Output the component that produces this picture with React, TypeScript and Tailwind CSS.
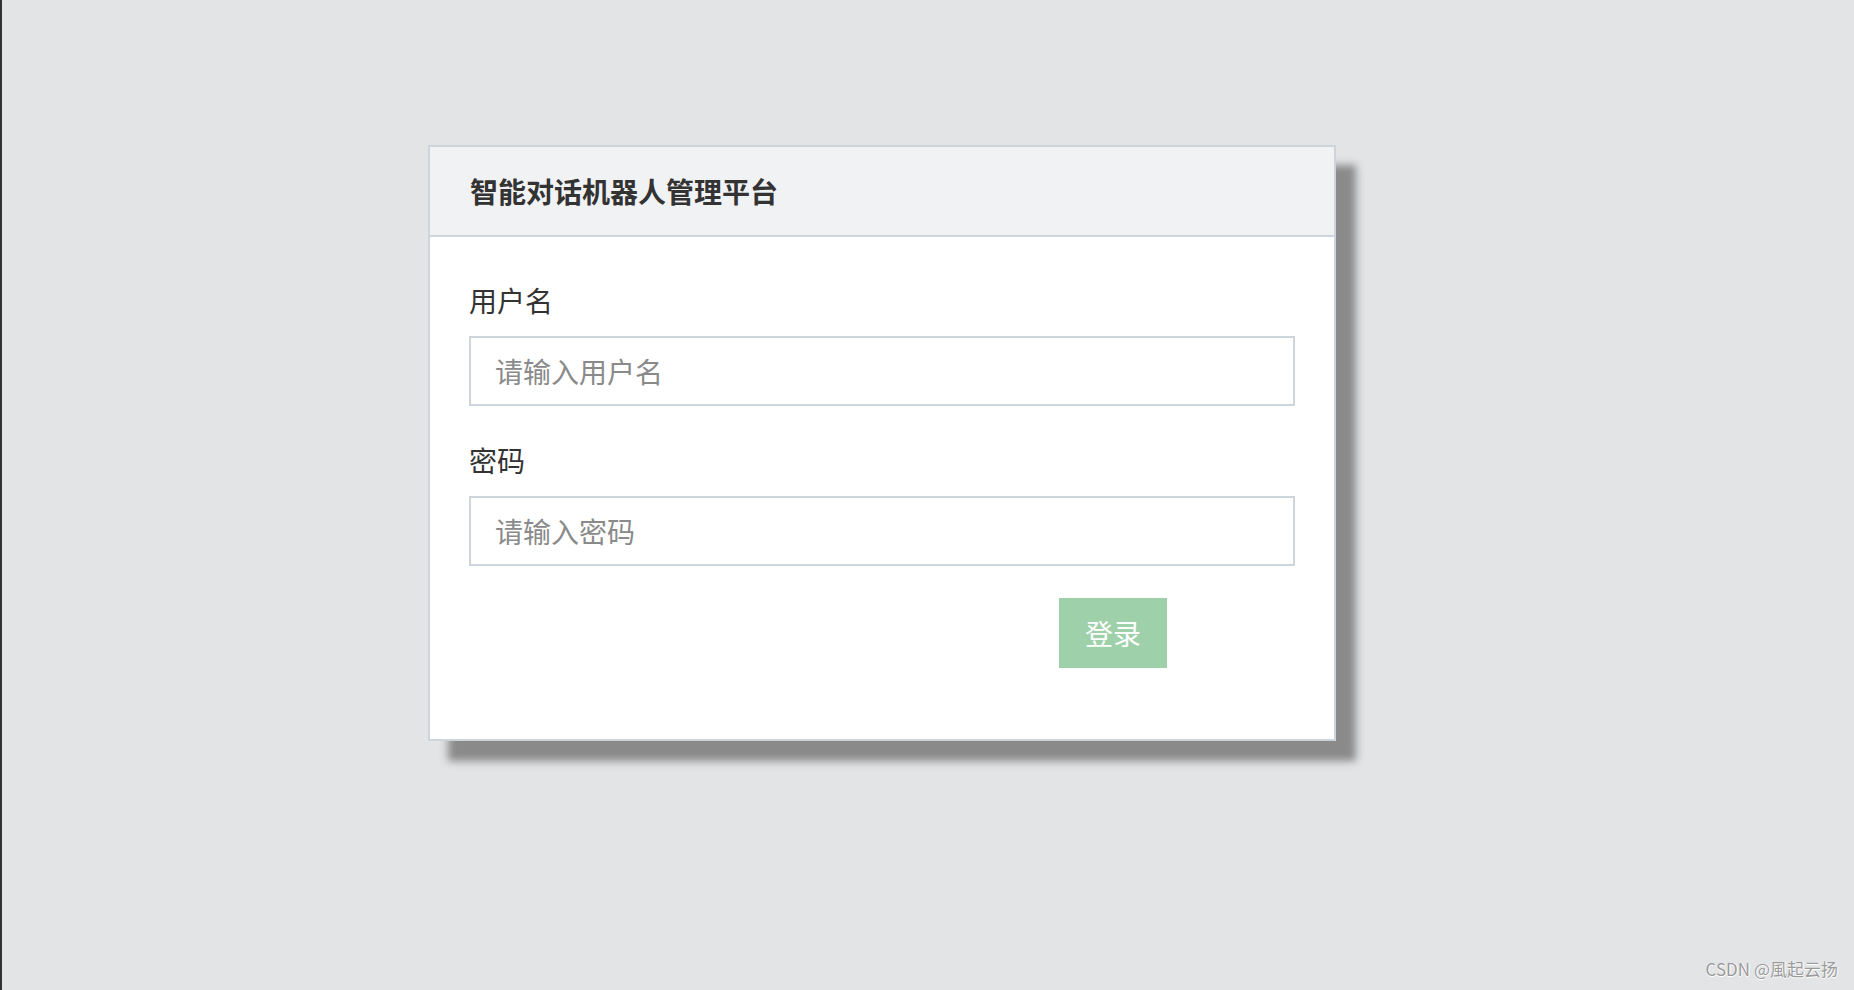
import React from "react";

const font = { fontFamily: '"Microsoft YaHei", "Noto Sans CJK SC", sans-serif' };

const Field: React.FC<{ label: string; placeholder: string; type?: string; first?: boolean }> = ({
  label,
  placeholder,
  type = "text",
  first,
}) => (
  <div className={first ? "" : "mt-[33px]"}>
    <label className="block text-[28px] leading-[42px] text-[#333]">{label}</label>
    <input
      type={type}
      placeholder={placeholder}
      className="mt-[15px] block w-full h-[70px] border-2 border-[#cdd6dd] bg-white px-[24px] text-[28px] text-[#333] placeholder:text-[#8a8a8a] outline-none"
    />
  </div>
);

export default function App() {
  return (
    <div
      className="relative w-full h-[990px] bg-[#e3e4e6] border-l-2 border-[#333] overflow-hidden"
      style={font}
    >
      <div className="pt-[145px] pl-[426px]">
        <div className="w-[908px] h-[596px] bg-white border-2 border-[#ccd5dc] shadow-[20px_20px_8px_#8a8a8a]">
          <div className="h-[90px] bg-[#f1f2f4] border-b-2 border-[#ccd5dc] flex items-center pl-[40px]">
            <h1 className="text-[28px] font-bold text-[#333]">智能对话机器人管理平台</h1>
          </div>
          <div className="px-[39px] pt-[42px]">
            <Field label="用户名" placeholder="请输入用户名" first />
            <Field label="密码" placeholder="请输入密码" type="password" />
            <div className="mt-[32px]">
              <button className="ml-[590px] w-[108px] h-[70px] bg-[#9ed1a9] text-white text-[28px]">
                登录
              </button>
            </div>
          </div>
        </div>
      </div>
      <div
        className="absolute right-[16px] bottom-[9px] text-[17px] text-[#9a9a9a]"
        style={{ textShadow: "0 1px 0 #fff, 1px 0 0 #fff" }}
      >
        CSDN @風起云扬
      </div>
    </div>
  );
}
